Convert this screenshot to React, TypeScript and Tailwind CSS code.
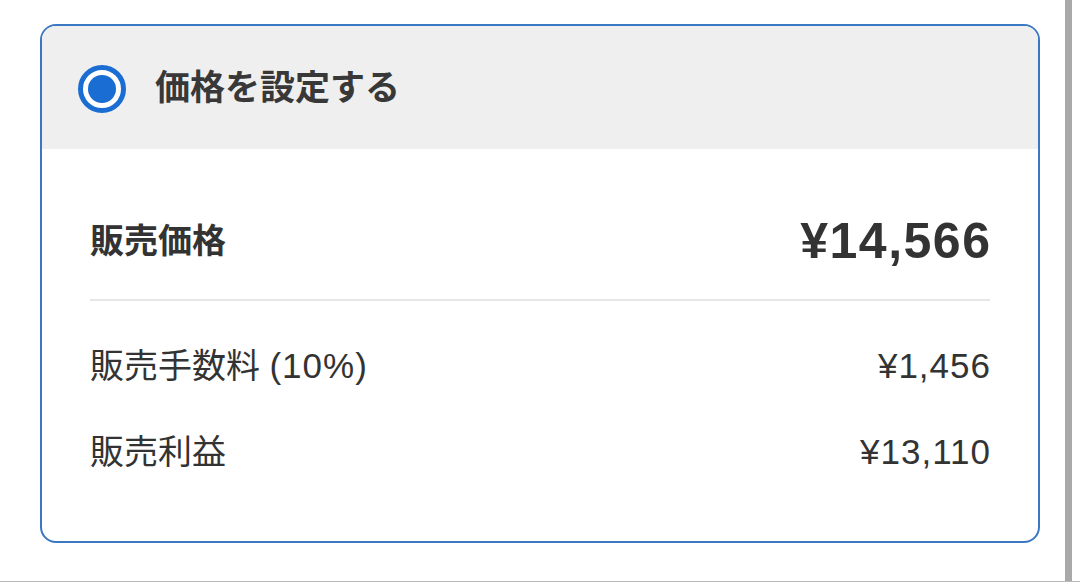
import type { ReactNode } from "react";

const font = { fontFamily: '"Liberation Sans", "Noto Sans CJK JP", sans-serif' };

function Radio() {
  return (
    <div className="flex h-[48px] w-[48px] shrink-0 items-center justify-center rounded-full border-[5px] border-[#1a6dd2] bg-white">
      <div className="h-[28px] w-[28px] rounded-full bg-[#1a6dd2]" />
    </div>
  );
}

function Row({ label, value, className }: { label: ReactNode; value: string; className?: string }) {
  return (
    <div className={"flex h-[50px] items-center justify-between text-[35px] text-[#333]" + (className ? " " + className : "")}>
      <span className="text-[34px]">{label}</span>
      <span className="-mr-[1px] tracking-[1px]">{value}</span>
    </div>
  );
}

export default function App() {
  return (
    <div className="flex h-[582px] w-[1080px] border-b border-[#b8b8b8] bg-white" style={font}>
      <div className="flex-1 pl-[40px] pr-[25px] pt-[24px]">
        <div className="w-[1000px] overflow-hidden rounded-[16px] border-2 border-[#3b78c4] bg-white">
          <div className="flex h-[123px] items-center gap-[29px] bg-[#efeff0] pl-[36px] pt-[2px]">
            <Radio />
            <span className="text-[35px] font-bold text-[#383838]">価格を設定する</span>
          </div>
          <div className="h-[392px] px-[48px] pt-[62px]">
            <div className="flex h-[60px] items-center justify-between text-[#333]">
              <span className="text-[34px] font-bold">販売価格</span>
              <span className="-mr-[1.5px] text-[50px] font-bold tracking-[1.5px]">¥14,566</span>
            </div>
            <div className="mt-[28px] h-[2px] bg-[#e6e6e6]" />
            <Row
              label={
                <>
                  販売手数料 <span className="text-[35px] tracking-[1px]">(10%)</span>
                </>
              }
              value="¥1,456"
              className="mt-[40px]"
            />
            <Row label="販売利益" value="¥13,110" className="mt-[36px]" />
          </div>
        </div>
      </div>
      <div className="w-[7px] bg-[#a9a9a9]" />
      <div className="w-[8px]" />
    </div>
  );
}
